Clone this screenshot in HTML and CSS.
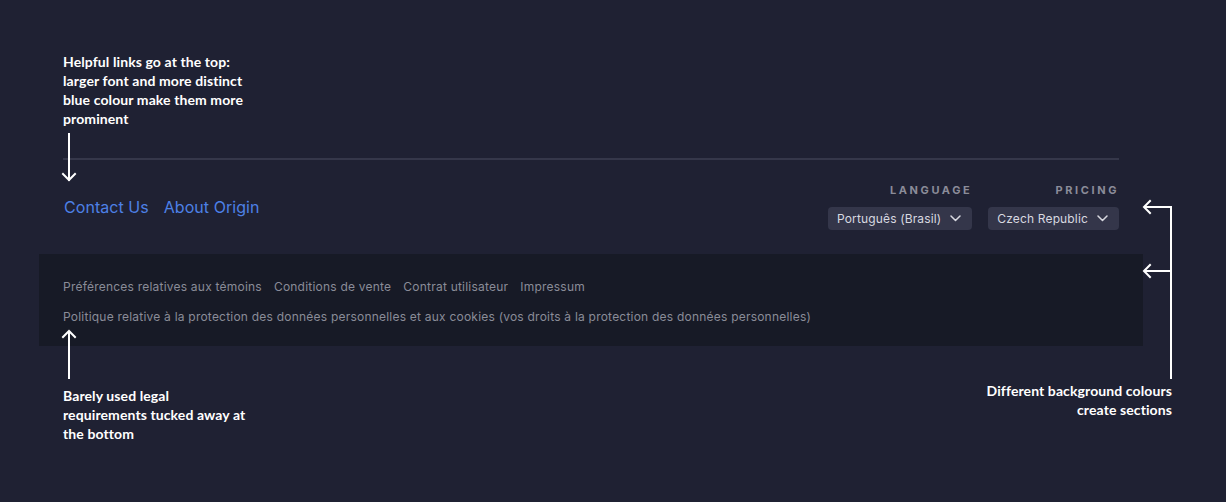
FILE: index.html
```html
<!DOCTYPE html>
<html lang="en">
<head>
<meta charset="utf-8">
<title>Footer annotations</title>
<link rel="stylesheet" href="styles.css">
</head>
<body>
<div class="page">
  <footer class="footer">
    <div class="footer-top">
      <nav class="helpful">
        <a href="#">Contact Us</a>
        <a href="#">About Origin</a>
      </nav>
      <div class="selectors">
        <div class="selector">
          <div class="sel-label">LANGUAGE</div>
          <button class="sel-box">Português (Brasil)
            <svg class="chev" width="11" height="7" viewBox="0 0 11 7"><polyline points="1,1 5.5,5.5 10,1" fill="none" stroke="#d8d9e0" stroke-width="1.5" stroke-linecap="round" stroke-linejoin="round"/></svg>
          </button>
        </div>
        <div class="selector">
          <div class="sel-label">PRICING</div>
          <button class="sel-box">Czech Republic
            <svg class="chev" width="11" height="7" viewBox="0 0 11 7"><polyline points="1,1 5.5,5.5 10,1" fill="none" stroke="#d8d9e0" stroke-width="1.5" stroke-linecap="round" stroke-linejoin="round"/></svg>
          </button>
        </div>
      </div>
    </div>
    <div class="legal">
      <div class="legal-row">
        <a href="#">Préférences relatives aux témoins</a>
        <a href="#">Conditions de vente</a>
        <a href="#">Contrat utilisateur</a>
        <a href="#">Impressum</a>
      </div>
      <div class="legal-row">
        <a href="#">Politique relative à la protection des données personnelles et aux cookies (vos droits à la protection des données personnelles)</a>
      </div>
    </div>
  </footer>

  <p class="note note-top">Helpful links go at the top:<br>larger font and more distinct<br>blue colour make them more<br>prominent</p>
  <p class="note note-bottom">Barely used legal<br>requirements tucked away at<br>the bottom</p>
  <p class="note note-right">Different background colours<br>create sections</p>

  <svg class="arrows" width="1226" height="502" viewBox="0 0 1226 502">
    <g fill="none" stroke="#ffffff" stroke-width="2" stroke-linecap="square">
      <line x1="69" y1="134" x2="69" y2="180"/>
      <polyline points="63,174 69,180 75,174"/>
      <line x1="69" y1="332" x2="69" y2="378"/>
      <polyline points="63,337 69,331 75,337"/>
      <polyline points="1145,207 1171,207 1171,378"/>
      <line x1="1145" y1="271" x2="1171" y2="271"/>
      <polyline points="1150,201 1144,207 1150,213"/>
      <polyline points="1150,265 1144,271 1150,277"/>
    </g>
  </svg>
</div>
</body>
</html>
```
FILE: styles.css
```css
* { box-sizing: border-box; }
html, body {
  margin: 0;
  padding: 0;
  background: #1f2133;
}
.page {
  position: relative;
  width: 1226px;
  height: 502px;
  overflow: hidden;
  font-family: Inter, "Noto Sans", sans-serif;
}
.footer {
  padding-top: 158px;
  padding-left: 39px;
  width: 1143px;
}
.footer-top {
  margin-left: 24px;
  width: 1056px;
  border-top: 2px solid #35374a;
  display: flex;
  justify-content: space-between;
  align-items: flex-start;
  padding-top: 24px;
  height: 96px;
}
.helpful {
  display: flex;
  gap: 15px;
  padding-top: 13px;
  padding-left: 1px;
}
.helpful a {
  color: #4d80e6;
  text-decoration: none;
  font-size: 16px;
  letter-spacing: 0.05px;
}
.selectors {
  display: flex;
  gap: 16px;
}
.selector {
  display: flex;
  flex-direction: column;
  align-items: flex-end;
}
.sel-label {
  color: #8b8c99;
  font-weight: 700;
  font-size: 11px;
  letter-spacing: 2.6px;
  margin-right: 0;
  line-height: 13px;
  margin-bottom: 10px;
}
.sel-box {
  display: flex;
  align-items: center;
  gap: 9px;
  height: 23px;
  padding: 0 11px 0 9px;
  background: #34364a;
  border: none;
  border-radius: 4px;
  color: #d8d9e0;
  font-family: Inter, "Noto Sans", sans-serif;
  font-size: 12px;
  letter-spacing: 0.15px;
}
.chev { display: block; }
.legal {
  background: #171a26;
  height: 92px;
  padding: 25px 24px 0;
}
.legal-row {
  display: flex;
  gap: 12px;
  line-height: 16px;
  margin-bottom: 14px;
}
.legal-row a {
  color: #8a8c98;
  text-decoration: none;
  font-size: 12px;
  letter-spacing: 0.22px;
  white-space: nowrap;
}
.note {
  position: absolute;
  margin: 0;
  color: #ffffff;
  font-family: Lato, "Open Sans", sans-serif;
  font-weight: 700;
  font-size: 14px;
  letter-spacing: 0.1px;
  line-height: 19px;
}
.note-top { left: 63px; top: 52px; }
.note-bottom { left: 63px; top: 386px; }
.note-right { right: 54px; top: 381px; text-align: right; }
.arrows {
  position: absolute;
  left: 0;
  top: 0;
  pointer-events: none;
}
```
